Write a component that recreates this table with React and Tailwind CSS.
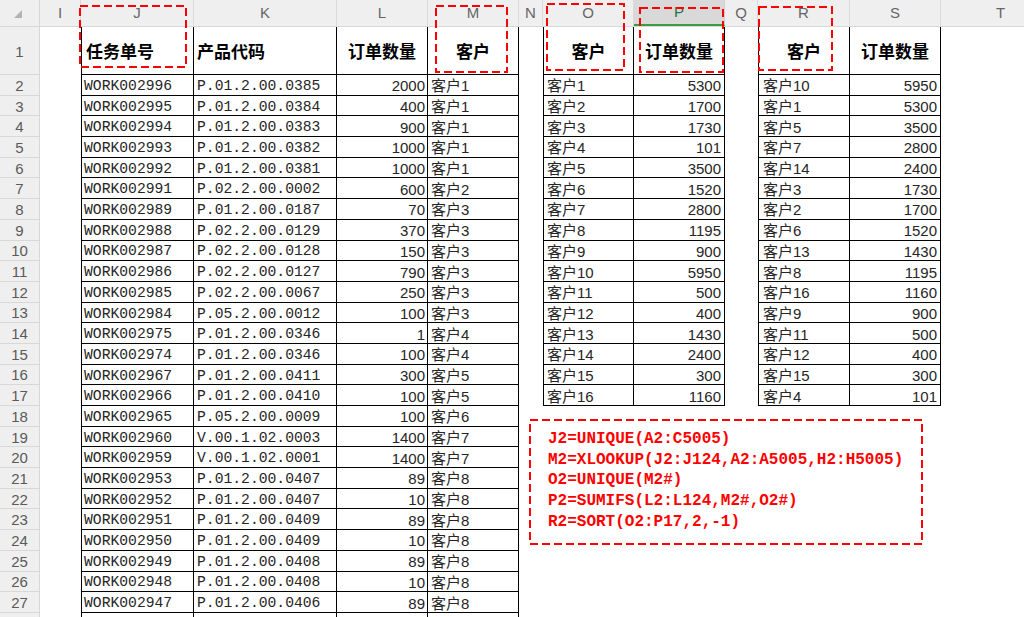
import React from "react";

const A = [
  ["WORK002996", "P.01.2.00.0385", "2000", "客户1"],
  ["WORK002995", "P.01.2.00.0384", "400", "客户1"],
  ["WORK002994", "P.01.2.00.0383", "900", "客户1"],
  ["WORK002993", "P.01.2.00.0382", "1000", "客户1"],
  ["WORK002992", "P.01.2.00.0381", "1000", "客户1"],
  ["WORK002991", "P.02.2.00.0002", "600", "客户2"],
  ["WORK002989", "P.01.2.00.0187", "70", "客户3"],
  ["WORK002988", "P.02.2.00.0129", "370", "客户3"],
  ["WORK002987", "P.02.2.00.0128", "150", "客户3"],
  ["WORK002986", "P.02.2.00.0127", "790", "客户3"],
  ["WORK002985", "P.02.2.00.0067", "250", "客户3"],
  ["WORK002984", "P.05.2.00.0012", "100", "客户3"],
  ["WORK002975", "P.01.2.00.0346", "1", "客户4"],
  ["WORK002974", "P.01.2.00.0346", "100", "客户4"],
  ["WORK002967", "P.01.2.00.0411", "300", "客户5"],
  ["WORK002966", "P.01.2.00.0410", "100", "客户5"],
  ["WORK002965", "P.05.2.00.0009", "100", "客户6"],
  ["WORK002960", "V.00.1.02.0003", "1400", "客户7"],
  ["WORK002959", "V.00.1.02.0001", "1400", "客户7"],
  ["WORK002953", "P.01.2.00.0407", "89", "客户8"],
  ["WORK002952", "P.01.2.00.0407", "10", "客户8"],
  ["WORK002951", "P.01.2.00.0409", "89", "客户8"],
  ["WORK002950", "P.01.2.00.0409", "10", "客户8"],
  ["WORK002949", "P.01.2.00.0408", "89", "客户8"],
  ["WORK002948", "P.01.2.00.0408", "10", "客户8"],
  ["WORK002947", "P.01.2.00.0406", "89", "客户8"],
];

const B = [
  ["客户1", "5300"], ["客户2", "1700"], ["客户3", "1730"], ["客户4", "101"],
  ["客户5", "3500"], ["客户6", "1520"], ["客户7", "2800"], ["客户8", "1195"],
  ["客户9", "900"], ["客户10", "5950"], ["客户11", "500"], ["客户12", "400"],
  ["客户13", "1430"], ["客户14", "2400"], ["客户15", "300"], ["客户16", "1160"],
];

const C = [
  ["客户10", "5950"], ["客户1", "5300"], ["客户5", "3500"], ["客户7", "2800"],
  ["客户14", "2400"], ["客户3", "1730"], ["客户2", "1700"], ["客户6", "1520"],
  ["客户13", "1430"], ["客户8", "1195"], ["客户16", "1160"], ["客户9", "900"],
  ["客户11", "500"], ["客户12", "400"], ["客户15", "300"], ["客户4", "101"],
];

const COLS = [
  { k: "I", w: "w-[41px]" },
  { k: "J", w: "w-[113px]" },
  { k: "K", w: "w-[143px]" },
  { k: "L", w: "w-[91px]" },
  { k: "M", w: "w-[91px]" },
  { k: "N", w: "w-[24px]" },
  { k: "O", w: "w-[91px]" },
  { k: "P", w: "w-[91px]" },
  { k: "Q", w: "w-[33px]" },
  { k: "R", w: "w-[92px]" },
  { k: "S", w: "w-[91px]" },
  { k: "T", w: "w-[120px]" },
];

const HEAD = { J: "任务单号", K: "产品代码", L: "订单数量", M: "客户", O: "客户", P: "订单数量", R: "客户", S: "订单数量" };

const MONO = "font-['Liberation_Mono',monospace] text-[14.7px] text-[#262626] pt-[3px]";
const SANS = "font-['Liberation_Sans','Noto_Sans_CJK_SC',sans-serif] text-[15px] text-[#262626] pt-[2px]";

function inTable(k, r) {
  if (["J", "K", "L", "M"].includes(k)) return true;
  if (["O", "P", "R", "S"].includes(k)) return r <= 17;
  return false;
}

function Cell({ col, r }) {
  const k = col.k;
  const tbl = inTable(k, r);
  const first = k === "J" || k === "O" || k === "R";
  let border = "";
  if (tbl) border = first ? "border-l border-r border-b border-black" : "border-r border-b border-black";

  let content = null;
  let align = "justify-start";
  let pad = "";
  let font = SANS;

  if (tbl && r === 1) {
    font = "font-['Noto_Sans_CJK_SC',sans-serif] font-bold text-[17px] text-black";
    if (k === "J") { pad = "pl-[4px]"; }
    else if (k === "K") { pad = "pl-[3px]"; }
    else { align = "justify-center"; }
    content = HEAD[k];
  } else if (tbl && A[r - 2]) {
    const i = r - 2;
    if (k === "J") { content = A[i][0]; font = MONO; pad = "pl-[2px]"; }
    if (k === "K") { content = A[i][1]; font = MONO; pad = "pl-[3px]"; }
    if (k === "L") { content = A[i][2]; align = "justify-end"; pad = "pr-[2px]"; }
    if (k === "M") { content = A[i][3]; pad = "pl-[3px]"; }
    if (k === "O") { content = B[i][0]; pad = "pl-[3px]"; }
    if (k === "P") { content = B[i][1]; align = "justify-end"; pad = "pr-[3px]"; }
    if (k === "R") { content = C[i][0]; pad = "pl-[4px]"; }
    if (k === "S") { content = C[i][1]; align = "justify-end"; pad = "pr-[3px]"; }
  }

  return (
    <div className={`${col.w} shrink-0 h-full flex items-center overflow-hidden whitespace-nowrap leading-none ${border} ${align} ${pad} ${font}`}>
      {content}
    </div>
  );
}

function DashBox({ cls, w, h, children }) {
  return (
    <div className={`absolute pointer-events-none ${cls}`}>
      <svg className="absolute left-0 top-0" width={w} height={h}>
        <rect x="1" y="1" width={w - 2} height={h - 2} fill="none" stroke="#ff0000" strokeWidth="2" strokeDasharray="8 4" />
      </svg>
      {children}
    </div>
  );
}

export default function App() {
  const rows = [];
  for (let r = 1; r <= 28; r++) rows.push(r);

  return (
    <div className="relative w-[1024px] h-[617px] overflow-hidden bg-white font-['Liberation_Sans','Noto_Sans_CJK_SC',sans-serif]">
      {/* column header */}
      <div className="flex h-[27px] bg-[#efefef] border-b border-[#d8d8d8]">
        <div className="w-[40px] shrink-0 h-full border-r border-[#d8d8d8] relative">
          <svg className="absolute left-0 top-0" width="40" height="27">
            <polygon points="14,18 22,18 22,10" fill="#b3b3b3" />
          </svg>
        </div>
        {COLS.map((c) =>
          c.k === "P" ? (
            <div key={c.k} className={`${c.w} shrink-0 h-full flex items-center justify-center bg-[#d9d9d9] border-r border-[#d0d0d0] border-b-2 border-b-[#3f9b3f] text-[#217346] text-[15px]`}>
              {c.k}
            </div>
          ) : (
            <div key={c.k} className={`${c.w} shrink-0 h-full flex items-center justify-center border-r border-[#dadada] text-[#666666] text-[15px]`}>
              {c.k}
            </div>
          )
        )}
      </div>

      {/* rows */}
      {rows.map((r) => (
        <div key={r} className={`flex ${r === 1 ? "h-[48px]" : "h-[20.7px]"}`}>
          <div className="w-[40px] shrink-0 h-full flex items-center justify-center bg-[#efefef] border-r border-b border-[#d8d8d8] text-[15px] text-[#5a5a5a] leading-none pt-[1px]">
            {r <= 27 ? r : null}
          </div>
          {COLS.map((c) => (
            <Cell key={c.k} col={c} r={r} />
          ))}
        </div>
      ))}

      {/* highlight boxes */}
      <DashBox cls="left-[79px] top-[5px] w-[108px] h-[63px]" w={108} h={63} />
      <DashBox cls="left-[435px] top-[5px] w-[73px] h-[68px]" w={73} h={68} />
      <DashBox cls="left-[546px] top-[3px] w-[79px] h-[68px]" w={79} h={68} />
      <DashBox cls="left-[639px] top-[7px] w-[85px] h-[66px]" w={85} h={66} />
      <DashBox cls="left-[758px] top-[6px] w-[75px] h-[65px]" w={75} h={65} />

      {/* formula note */}
      <DashBox cls="left-[529px] top-[419px] w-[394px] h-[126px]" w={394} h={126}>
        <div className="relative pl-[19px] pt-[10px] font-['Liberation_Mono',monospace] font-bold text-[16px] leading-[20.7px] text-[#ff0000] whitespace-nowrap">
          <div>J2=UNIQUE(A2:C5005)</div>
          <div>M2=XLOOKUP(J2:J124,A2:A5005,H2:H5005)</div>
          <div>O2=UNIQUE(M2#)</div>
          <div>P2=SUMIFS(L2:L124,M2#,O2#)</div>
          <div>R2=SORT(O2:P17,2,-1)</div>
        </div>
      </DashBox>
    </div>
  );
}
